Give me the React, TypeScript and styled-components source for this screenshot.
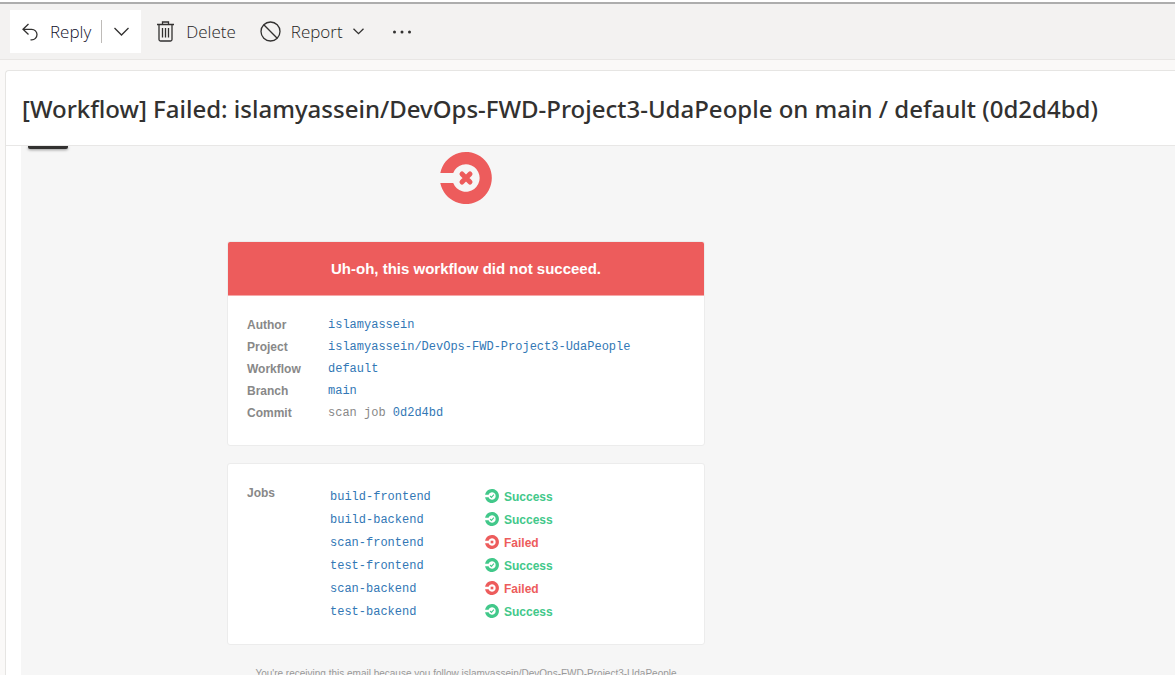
import React from "react";
import styled, { createGlobalStyle } from "styled-components";

const GlobalStyle = createGlobalStyle`
  *, *::before, *::after { box-sizing: border-box; }
  html, body, #root { height: 100%; }
  body {
    margin: 0;
    overflow: hidden;
    background: #faf9f8;
    color: #323130;
    font-family: "Open Sans", "Noto Sans", sans-serif;
  }
`;

const Page = styled.div`
  display: flex;
  flex-direction: column;
  height: 100%;
  border-top: 2px solid #ffffff;
`;

const Toolbar = styled.header`
  display: flex;
  flex: none;
  align-items: center;
  height: 58px;
  padding-left: 10px;
  background: #f3f2f1;
  border-top: 2px solid #adadad;
  border-bottom: 1px solid #e8e6e4;
`;

const SplitButton = styled.div`
  display: flex;
  align-items: center;
  height: 43px;
  margin-right: 4px;
  background: #ffffff;
`;

const ToolButton = styled.button<{ $gap?: number }>`
  display: flex;
  align-items: center;
  gap: ${(p) => p.$gap ?? 0}px;
  height: 43px;
  padding: 0 12px;
  border: 0;
  background: transparent;
  color: #252423;
  font: 300 17px/24px "Open Sans", "Noto Sans", sans-serif;
  white-space: nowrap;
  cursor: pointer;
`;

const ReplyButton = styled(ToolButton)`
  padding-right: 10px;
  color: #11102b;
`;

const MoreButton = styled(ToolButton)`
  padding: 0 16px;
`;

const Divider = styled.span`
  width: 1px;
  height: 23px;
  background: #bebbb8;
`;

const Icon = styled.svg`
  display: block;
  flex: none;
  fill: none;
  stroke: #323130;
  stroke-width: 1.3;
`;

const Dots = styled(Icon)`
  fill: #323130;
  stroke: none;
`;

const Message = styled.main`
  display: flex;
  flex: 1;
  flex-direction: column;
  min-height: 0;
  margin: 10px 0 0 5px;
  background: #ffffff;
  border: 1px solid #e6e5e3;
  border-width: 1px 0 0 1px;
  border-top-left-radius: 4px;
`;

const Subject = styled.h1`
  flex: none;
  margin: 0;
  padding: 22px 16px 20px;
  border-bottom: 1px solid #e8e7e6;
  font: 500 24px/32px "Noto Sans", sans-serif;
  white-space: nowrap;
`;

const Body = styled.div`
  flex: 1;
  min-height: 0;
  margin-left: 15px;
  padding-left: 7px;
  overflow: hidden;
  background: #f6f6f6;
`;

const Tab = styled.div`
  width: 40px;
  height: 3px;
  background: #323130;
  border-radius: 0 0 2px 2px;
  box-shadow: 0 1px 3px rgba(0, 0, 0, 0.4);
`;

const Email = styled.article`
  display: flex;
  flex-direction: column;
  width: 478px;
  margin-left: 199px;
  padding-top: 3px;
  font-family: "Liberation Sans", Arial, sans-serif;
`;

const Logo = styled.svg`
  display: block;
  align-self: center;
  margin-bottom: 37px;
`;

const Card = styled.section`
  margin-bottom: 17px;
  overflow: hidden;
  background: #ffffff;
  border: 1px solid #ececec;
  border-radius: 3px;
`;

const Banner = styled.h2`
  margin: 0;
  padding: 16px 0 15px;
  background: #ed5c5c;
  border-bottom: 1px solid #f6a8a8;
  color: #ffffff;
  font-size: 15px;
  line-height: 22px;
  text-align: center;
`;

const Details = styled.table`
  margin: 18px 19px 21px;
  border-collapse: collapse;
  color: #888888;
  font-size: 12px;
  line-height: 22px;

  th {
    width: 81px;
    padding: 0;
    text-align: left;
  }
  td {
    padding: 0;
    font-family: "Liberation Mono", "Courier New", monospace;
  }
`;

const Link = styled.a`
  color: #3277b5;
  text-decoration: none;
`;

const JobsLayout = styled.div`
  display: flex;
  padding: 18px 19px 20px;
`;

const JobsTitle = styled.h3`
  width: 83px;
  margin: 0;
  color: #888888;
  font-size: 12px;
  line-height: 22px;
`;

const JobsTable = styled.table`
  margin-top: 4px;
  border-collapse: collapse;
  font-size: 12px;
  line-height: 23px;

  td {
    height: 23px;
    padding: 0;
  }
  td:first-child {
    width: 155px;
    font-family: "Liberation Mono", "Courier New", monospace;
  }
`;

const Status = styled.span<{ $ok: boolean }>`
  display: flex;
  align-items: center;
  gap: 5px;
  color: ${(p) => (p.$ok ? "#42c88a" : "#ed5c5c")};
  font-weight: 700;

  svg {
    margin-bottom: 3px;
  }
`;

const Footer = styled.p`
  margin: 5px 0 0;
  color: #999999;
  font-size: 10px;
  line-height: 14px;
  text-align: center;
  white-space: nowrap;
`;

const RING = "M.3 21A26 26 0 1 1 .3 31H13.2A13.7 13.7 0 1 0 13.2 21Z";

function StatusIcon({ ok }: { ok: boolean }) {
  const color = ok ? "#42c88a" : "#ed5c5c";
  return (
    <svg width="14" height="14" viewBox="0 0 52 52" aria-hidden="true">
      <path d={RING} fill={color} />
      {ok ? (
        <path d="M19 26l5 5 9-10" fill="none" stroke={color} strokeWidth="4" />
      ) : (
        <path d="M23 23l6 6M29 23l-6 6" stroke={color} strokeWidth="5" strokeLinecap="round" />
      )}
    </svg>
  );
}

const details = [
  { label: "Author", link: "islamyassein" },
  { label: "Project", link: "islamyassein/DevOps-FWD-Project3-UdaPeople" },
  { label: "Workflow", link: "default" },
  { label: "Branch", link: "main" },
  { label: "Commit", text: "scan job ", link: "0d2d4bd" },
];

const jobs = [
  { name: "build-frontend", ok: true },
  { name: "build-backend", ok: true },
  { name: "scan-frontend", ok: false },
  { name: "test-frontend", ok: true },
  { name: "scan-backend", ok: false },
  { name: "test-backend", ok: true },
];

export default function App() {
  return (
    <>
      <GlobalStyle />
      <Page>
        <Toolbar>
          <SplitButton>
            <ReplyButton $gap={11}>
              <Icon width="17" height="18" viewBox="0 0 17 18">
                <path d="M6.5 1L1 6.3l5.500 5.200M1 6.300h8.700a5.300 5.300 0 0 1 0 10.600H8.500" />
              </Icon>
              Reply
            </ReplyButton>
            <Divider />
            <ToolButton aria-label="More reply options">
              <Icon width="15" height="9" viewBox="0 0 15 9">
                <path d="M.5 1l7 7 7-7" />
              </Icon>
            </ToolButton>
          </SplitButton>
          <ToolButton $gap={12}>
            <Icon width="17" height="21" viewBox="0 0 17 21">
              <path d="M0 3.500h17M5.500 3.500V1h6v2.500M2 3.500V18.500q0 1.500 1.500 1.500h10q1.500 0 1.500-1.500V3.500M5.500 7v9.500M8.500 7v9.500M11.500 7v9.500" />
            </Icon>
            Delete
          </ToolButton>
          <ToolButton $gap={10}>
            <Icon width="21" height="21" viewBox="0 0 21 21">
              <circle cx="10.500" cy="10.500" r="9.500" />
              <path d="M3.800 3.800l13.400 13.400" />
            </Icon>
            Report
            <Icon width="11" height="7" viewBox="0 0 11 7">
              <path d="M.5.7l5 5 5-5" />
            </Icon>
          </ToolButton>
          <MoreButton aria-label="More actions">
            <Dots width="20" height="4" viewBox="0 0 20 4">
              <circle cx="2.500" cy="2" r="1.500" />
              <circle cx="10" cy="2" r="1.500" />
              <circle cx="17.500" cy="2" r="1.500" />
            </Dots>
          </MoreButton>
        </Toolbar>
        <Message>
          <Subject>
            [Workflow] Failed: islamyassein/DevOps-FWD-Project3-UdaPeople on main / default (0d2d4bd)
          </Subject>
          <Body>
            <Tab />
            <Email>
              <Logo width="52" height="52" viewBox="0 0 52 52" role="img" aria-label="CircleCI">
                <path d={RING} fill="#ed5c5c" />
                <path d="M22 22l8 8M30 22l-8 8" stroke="#ed5c5c" strokeWidth="5" strokeLinecap="round" />
              </Logo>
              <Card>
                <Banner>Uh-oh, this workflow did not succeed.</Banner>
                <Details>
                  <tbody>
                    {details.map((row) => (
                      <tr key={row.label}>
                        <th scope="row">{row.label}</th>
                        <td>
                          {row.text}
                          <Link href="#">{row.link}</Link>
                        </td>
                      </tr>
                    ))}
                  </tbody>
                </Details>
              </Card>
              <Card>
                <JobsLayout>
                  <JobsTitle>Jobs</JobsTitle>
                  <JobsTable>
                    <tbody>
                      {jobs.map((job) => (
                        <tr key={job.name}>
                          <td>
                            <Link href="#">{job.name}</Link>
                          </td>
                          <td>
                            <Status $ok={job.ok}>
                              <StatusIcon ok={job.ok} />
                              {job.ok ? "Success" : "Failed"}
                            </Status>
                          </td>
                        </tr>
                      ))}
                    </tbody>
                  </JobsTable>
                </JobsLayout>
              </Card>
              <Footer>
                You're receiving this email because you follow islamyassein/DevOps-FWD-Project3-UdaPeople
              </Footer>
            </Email>
          </Body>
        </Message>
      </Page>
    </>
  );
}
